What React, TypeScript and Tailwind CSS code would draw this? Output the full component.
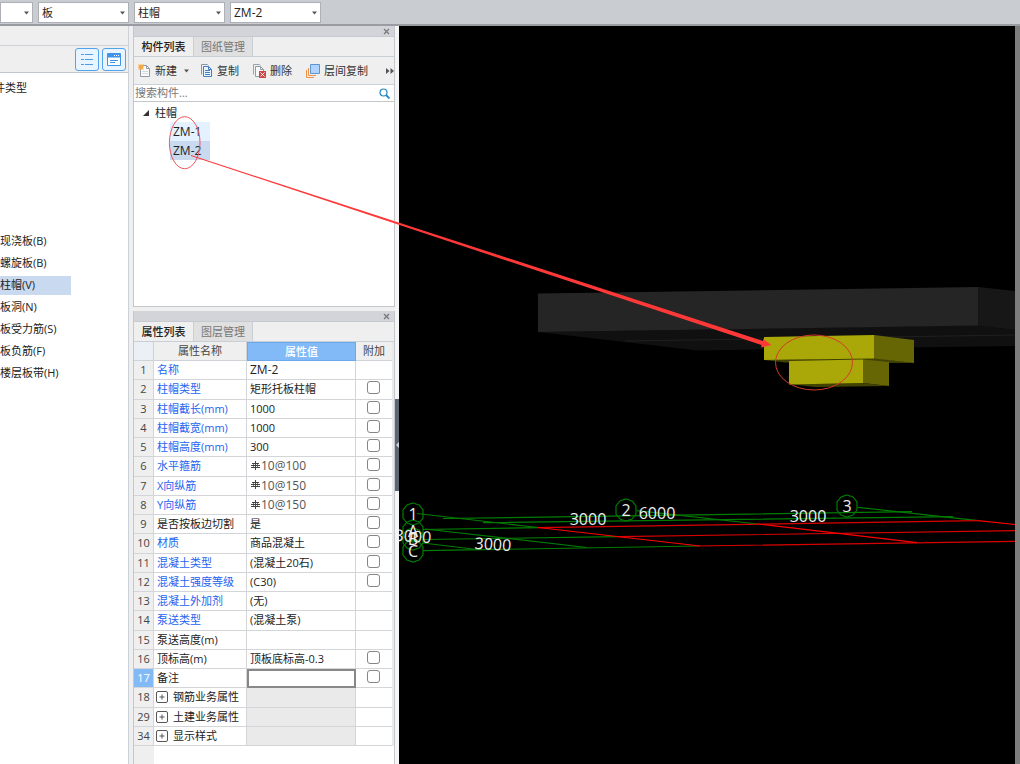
import React from 'react';

interface Property {
  no: number;
  name: string;
  value?: string;
  link?: boolean;
  rebar?: boolean;
  check?: boolean;
  group?: boolean;
  active?: boolean;
}

const properties: Property[] = [
  { no: 1, name: '名称', value: 'ZM-2', link: true },
  { no: 2, name: '柱帽类型', value: '矩形托板柱帽', link: true, check: true },
  { no: 3, name: '柱帽截长(mm)', value: '1000', link: true, check: true },
  { no: 4, name: '柱帽截宽(mm)', value: '1000', link: true, check: true },
  { no: 5, name: '柱帽高度(mm)', value: '300', link: true, check: true },
  { no: 6, name: '水平箍筋', value: '10@100', link: true, rebar: true, check: true },
  { no: 7, name: 'X向纵筋', value: '10@150', link: true, rebar: true, check: true },
  { no: 8, name: 'Y向纵筋', value: '10@150', link: true, rebar: true, check: true },
  { no: 9, name: '是否按板边切割', value: '是', check: true },
  { no: 10, name: '材质', value: '商品混凝土', link: true, check: true },
  { no: 11, name: '混凝土类型', value: '(混凝土20石)', link: true, check: true },
  { no: 12, name: '混凝土强度等级', value: '(C30)', link: true, check: true },
  { no: 13, name: '混凝土外加剂', value: '(无)', link: true },
  { no: 14, name: '泵送类型', value: '(混凝土泵)', link: true },
  { no: 15, name: '泵送高度(m)' },
  { no: 16, name: '顶标高(m)', value: '顶板底标高-0.3', check: true },
  { no: 17, name: '备注', check: true, active: true },
  { no: 18, name: '钢筋业务属性', group: true },
  { no: 29, name: '土建业务属性', group: true },
  { no: 34, name: '显示样式', group: true },
];

const categories = ['现浇板(B)', '螺旋板(B)', '柱帽(V)', '板洞(N)', '板受力筋(S)', '板负筋(F)', '楼层板带(H)'];

function TopSelect({ label, value, width }: { label: string; value: string; width: string }) {
  return (
    <div className={`relative shrink-0 ${width}`}>
      <select
        aria-label={label}
        defaultValue={value}
        className={`block h-[21px] w-full appearance-none border border-[#adb1b7] bg-white pl-[3px] leading-[19px] text-[#222] outline-none ${label === '构件' ? 'text-[12px]' : 'text-[11px]'}`}
      >
        <option>{value}</option>
      </select>
      <svg className="pointer-events-none absolute top-[9px] right-[4px] h-[4px] w-[5px]" viewBox="0 0 5 4">
        <path d="M0 .5h5L2.500 3.500z" fill="#555" />
      </svg>
    </div>
  );
}

function TitleBar({ label }: { label: string }) {
  return (
    <div className="flex h-[11px] shrink-0 items-center justify-end border-b border-[#c5c9d0] bg-[#d2d4da] pr-[4px]">
      <button aria-label={label}>
        <svg className="h-[7px] w-[7px]" viewBox="0 0 7 7">
          <path d="M1 1l5 5M6 1L1 6" stroke="#777" strokeWidth="1.2" />
        </svg>
      </button>
    </div>
  );
}

function Tabs({ items }: { items: string[] }) {
  return (
    <div className="flex h-[20px] shrink-0 border-b border-[#c9cfd6] bg-[#efefef]" role="tablist">
      <button role="tab" aria-selected="true" className="w-[59px] font-medium text-[#222]">{items[0]}</button>
      <button role="tab" aria-selected="false" className="w-[60px] border-x border-[#c9cfd6] bg-[#e0e0e0] text-[#777]">{items[1]}</button>
    </div>
  );
}

function NewIcon() {
  return (
    <svg className="h-[14px] w-[14px]" viewBox="0 0 14 14" fill="none">
      <path d="M2.500 5v7.500h9v-8l-3-3H5" fill="#fafafa" stroke="#929aa3" />
      <path d="M8.500 1.500v3h3" stroke="#929aa3" />
      <path d="M4 7.500h6M4 9.500h6" stroke="#d5dade" />
      <path d="M0 0l2 1 1-1 1 1 2-1-1 2 1 1-1 1 1 2-2-1-1 1-1-1-2 1 1-2-1-1 1-1z" fill="#f7a944" />
    </svg>
  );
}

function CopyIcon() {
  return (
    <svg className="h-[14px] w-[12px]" viewBox="0 0 12 14" fill="none">
      <path d="M.5 10.500v-10h6l1 1" stroke="#8c97a5" />
      <path d="M2.500 2.500h5l3 3v7h-8z" fill="#eaf3ff" stroke="#427fc6" />
      <path d="M7.500 2.500v3h3M4 6.500h5M4 8.500h5M4 10.500h5" stroke="#427fc6" />
    </svg>
  );
}

function DeleteIcon() {
  return (
    <svg className="h-[14px] w-[13px]" viewBox="0 0 13 14" fill="none">
      <path d="M.5 10.500v-10h6l1 1" stroke="#9ba3ad" />
      <path d="M6 12.500H2.500v-10h5l3 3V7" fill="#fafafa" stroke="#929aa3" />
      <path d="M7.500 2.500v3h3" stroke="#929aa3" />
      <path d="M6 7h7v7H6z" fill="#cf4545" />
      <path d="M7.500 8.500l4 4M11.500 8.500l-4 4" stroke="#fff" />
    </svg>
  );
}

function LayerIcon() {
  return (
    <svg className="h-[14px] w-[14px]" viewBox="0 0 14 14" fill="none">
      <path d="M.5 6v7.500H8M2.500 4v7.500H10" stroke="#f0924a" />
      <path d="M4.500.5h9v9h-9z" fill="#b0d4ff" stroke="#5a94d2" />
    </svg>
  );
}

function RebarIcon() {
  return (
    <svg className="mr-px mb-[3px] ml-px inline h-[9px] w-[9px]" viewBox="0 0 9 9" fill="none" stroke="#444">
      <path d="M4.500 0v9M0 6.500h9M1 2.500h7M0 4.500h9" />
      <path d="M2.500 2v5M6.500 2v5" strokeWidth=".7" />
    </svg>
  );
}

function Sidebar() {
  return (
    <aside className="flex w-[129px] shrink-0 flex-col border-r border-[#cbd1d8] bg-white">
      <div className="h-[20px] shrink-0 border-b border-[#cfd3d8] bg-[#efefef]" />
      <div className="flex h-[27px] shrink-0 items-center justify-end gap-[3px] border-b border-[#c3c8cf] bg-[#efefef] pr-[2px]">
        <button aria-label="列表视图" className="flex h-[23px] w-[24px] items-center justify-center rounded-[3px] border border-[#4fa3ef] bg-[#e8f4ff]">
          <svg className="h-[13px] w-[12px]" viewBox="0 0 12 13" stroke="#4b9cea" fill="none">
            <path d="M0 1.500h3M4 1.500h8M0 6.500h3M4 6.500h8M0 11.500h3M4 11.500h8" />
          </svg>
        </button>
        <button aria-label="窗口视图" className="flex h-[23px] w-[24px] items-center justify-center rounded-[3px] border border-[#4fa3ef] bg-[#e8f4ff]">
          <svg className="h-[13px] w-[14px]" viewBox="0 0 14 13" fill="none" stroke="#3f93e8">
            <path d="M.5.5h13v12H.5z" fill="#fff" />
            <path d="M1 1h12v3H1z" fill="#3f93e8" />
            <path d="M7 2.500h1M9 2.500h1M11 2.500h1" stroke="#fff" />
            <path d="M3 7.500h8M3 9.500h5" />
          </svg>
        </button>
      </div>
      <div className="-ml-[6px] mt-[6px] h-[18px] leading-[18px] whitespace-nowrap text-[#222]">件类型</div>
      <ul className="mt-[133px]">
        {categories.map((item) => (
          <li key={item} className="flex h-[22px] items-center">
            <button className={`h-[19px] w-[71px] text-left whitespace-nowrap ${item === '柱帽(V)' ? 'bg-[#c9d9f0]' : ''}`}>{item}</button>
          </li>
        ))}
      </ul>
    </aside>
  );
}

function ComponentPanel() {
  return (
    <section className="flex h-[281px] shrink-0 flex-col border border-t-0 border-[#c4c8cd] bg-white">
      <TitleBar label="关闭构件列表" />
      <Tabs items={['构件列表', '图纸管理']} />
      <div className="flex h-[28px] shrink-0 items-center border-b border-[#cbd1d8] bg-[#efefef] pl-[4px] whitespace-nowrap text-[#333]">
        <button className="flex items-center gap-[3px]">
          <NewIcon />
          新建
          <svg className="ml-[4px] h-[4px] w-[5px]" viewBox="0 0 5 4"><path d="M0 .5h5L2.500 3.500z" fill="#555" /></svg>
        </button>
        <button className="ml-[12px] flex items-center gap-[4px]"><CopyIcon />复制</button>
        <button className="ml-[14px] flex items-center gap-[4px]"><DeleteIcon />删除</button>
        <button className="ml-[14px] flex items-center gap-[4px]"><LayerIcon />层间复制</button>
        <button aria-label="更多" className="ml-auto">
          <svg className="h-[6px] w-[8px]" viewBox="0 0 8 6"><path d="M0 0l3.500 3L0 6zM4.500 0L8 3 4.500 6z" fill="#555" /></svg>
        </button>
      </div>
      <div className="flex h-[17px] shrink-0 items-center border-b border-[#c4c8cd] pr-[4px]">
        <input aria-label="搜索构件" placeholder="搜索构件..." className="min-w-0 flex-1 pl-px outline-none placeholder:text-[#777]" />
        <button aria-label="搜索">
          <svg className="h-[11px] w-[11px]" viewBox="0 0 11 11" fill="none" stroke="#2589c4">
            <circle cx="4.500" cy="4.500" r="3.500" strokeWidth="1.200" />
            <path d="M7 7l3.500 3.500" strokeWidth="1.800" />
          </svg>
        </button>
      </div>
      <div className="flex-1 pt-px">
        <button className="flex h-[19px] items-center gap-[6px] pl-[9px]">
          <svg className="h-[6px] w-[6px]" viewBox="0 0 6 6"><path d="M6 0v6H0z" fill="#333" /></svg>
          柱帽
        </button>
        <button className="ml-[36px] block h-[19px] w-[40px] bg-[#e4f1fe] pl-[3px] text-left text-[12px]">ZM-1</button>
        <button className="ml-[36px] block h-[19px] w-[40px] bg-[#c9d9f0] pl-[3px] text-left text-[12px]">ZM-2</button>
      </div>
    </section>
  );
}

function PropertyPanel() {
  return (
    <section className="mt-[4px] flex min-h-0 flex-1 flex-col border-x border-[#c4c8cd] bg-white">
      <TitleBar label="关闭属性列表" />
      <Tabs items={['属性列表', '图层管理']} />
      <table className="h-[404px] w-full shrink-0 table-fixed border-separate border-spacing-0 border-r-2 border-[#e8e9eb] text-left whitespace-nowrap">
        <colgroup>
          <col className="w-[20px]" />
          <col className="w-[93px]" />
          <col className="w-[109px]" />
          <col />
        </colgroup>
        <thead>
          <tr className="h-[19px] bg-[#efefef] text-center text-[#444]">
            <th className="border-r border-b border-[#cfd2d6] bg-[#eaf0f6] p-0" />
            <th className="border-r border-b border-[#cfd2d6] p-0 text-center font-normal">属性名称</th>
            <th className="border border-[#6ca9ea] bg-[#82baf8] p-0 text-center font-medium text-white">属性值</th>
            <th className="border-b border-[#cfd2d6] p-0 text-center font-normal">附加</th>
          </tr>
        </thead>
        <tbody>
          {properties.map((p) => (
            <tr key={p.no} className="h-[19px]">
              <td className={`border-r border-b border-[#d3d5d8] p-0 text-center ${p.active ? 'bg-[#82baf8] font-medium text-white' : 'bg-[#efefef] text-[#444]'}`}>{p.no}</td>
              <td className={`border-r border-b border-[#d3d5d8] p-0 ${p.group ? 'pl-[2px]' : 'pl-[3px]'} ${p.link ? 'text-[#2563f0]' : 'text-[#222]'}`}>
                {p.group ? (
                  <button className="flex items-center gap-[5px]">
                    <svg className="h-[12px] w-[12px]" viewBox="0 0 12 12" fill="none" stroke="#555">
                      <rect x=".5" y=".5" width="11" height="11" rx="1.500" />
                      <path d="M3.500 6h5M6 3.500v5" />
                    </svg>
                    {p.name}
                  </button>
                ) : p.name}
              </td>
              <td className={`p-0 ${p.rebar ? 'text-[12px] text-[#555]' : 'text-[#222]'} ${p.group ? 'bg-[#eaeaea]' : ''} ${p.no === 1 ? 'text-[12px]' : ''} ${p.active ? 'border-2 border-[#888]' : 'border-r border-b border-[#d3d5d8] pl-[3px]'}`}>
                {p.active ? (
                  <input aria-label={p.name} className="block h-[14px] w-full outline-none" />
                ) : (
                  <>
                    {p.rebar && <RebarIcon />}
                    {p.value}
                  </>
                )}
              </td>
              <td className="border-b border-[#d3d5d8] p-0 pr-[2px] pb-[3px]">
                {p.check && (
                  <input type="checkbox" aria-label={`附加 ${p.name}`} className="mx-auto block h-[13px] w-[13px] appearance-none rounded-[3px] border border-[#858585] bg-white" />
                )}
              </td>
            </tr>
          ))}
        </tbody>
      </table>
      <div className="w-[20px] flex-1 bg-[#efefef]" />
    </section>
  );
}

const decagon = '0,-11 6,-9 10,-4 10,4 6,9 0,11 -6,9 -10,4 -10,-4 -6,-9';

const axes = [
  { label: '1', x: 413, y: 514 },
  { label: '2', x: 626, y: 510 },
  { label: '3', x: 847, y: 506 },
  { label: 'A', x: 413, y: 531 },
  { label: 'B', x: 413, y: 539 },
  { label: 'C', x: 413, y: 551 },
];

function ModelView() {
  return (
    <main className="min-w-0 flex-1 overflow-hidden bg-black">
      <svg className="block h-full w-full" viewBox="399 26 616 738" preserveAspectRatio="xMinYMin slice">
        <polygon points="538,332 978,325 1015,330 1015,346 698,350.500" fill="#101010" />
        <path d="M625 341L1015 335" stroke="#202020" />
        <polygon points="538,293.500 978.500,287 978.500,325.500 538,332" fill="#252525" />
        <polygon points="978.500,287 1015,291 1015,330 978.500,325.500" fill="#171717" />
        <polygon points="764,360 874,358 914,363 785,362.500" fill="#424203" />
        <polygon points="789,384 862,383 889,386 815,387" fill="#424203" />
        <polygon points="789,361 863,359.500 863,383 789,384.500" fill="#a9a808" />
        <polygon points="863,359.500 889,362 889,386 863,383" fill="#666605" />
        <polygon points="764,337 874,335 874,358.500 764,360" fill="#a9a808" />
        <polygon points="874,335 914,340 914,363 874,358.500" fill="#666605" />
        <g stroke="#007d00" strokeWidth="1.200" fill="none">
          <path d="M417 513.500L538 527.500M425 529L587 547.500M423 543L477 549.500" />
          <path d="M443 518.500L912 511.700M483 522.700L953 516.700" />
          <path d="M423 529.500L538 527.700M423 539.500L617 536.700M423 550.700L697 546" />
          <path d="M637 510.700L758 524M858 507.300L978 520.700" />
          {axes.map((a) => (
            <polygon key={a.label} points={decagon} transform={`translate(${a.x} ${a.y})`} />
          ))}
        </g>
        <g stroke="#d90000" strokeWidth="1.200">
          <path d="M538 527.700L978 520.700M617 536.700L1015 530.700M697 546L1015 541.300" />
          <path d="M538 527.500L700 546M758 524L917 542.700M978 520.700L1015 524.500" stroke="#ff0000" />
        </g>
        <g fill="#eee" fontSize="16" textAnchor="middle">
          {axes.map((a) => (
            <text key={a.label} x={a.x} y={a.y + 6}>{a.label}</text>
          ))}
          <text x="588" y="525">3000</text>
          <text x="657" y="519">6000</text>
          <text x="808" y="522">3000</text>
          <text x="493" y="550" transform="rotate(4 493 544)">3000</text>
          <text x="413" y="542" transform="rotate(4 413 536)">3000</text>
        </g>
        <ellipse cx="814" cy="362.500" rx="38.500" ry="27.500" fill="none" stroke="#d23a2c" />
      </svg>
    </main>
  );
}

export default function App() {
  return (
    <div className="relative flex h-screen flex-col overflow-hidden bg-[#efefef] font-['Open_Sans','Noto_Sans_CJK_SC',sans-serif] text-[11px] leading-[14px] text-[#222]">
      <header className="flex h-[26px] shrink-0 items-start gap-[5px] border-b-2 border-[#999da3] bg-[#c9ccd1] pt-[2px]">
        <TopSelect label="楼层" value="" width="w-[33px]" />
        <TopSelect label="构件分类" value="板" width="w-[91px]" />
        <TopSelect label="构件类型" value="柱帽" width="w-[91px]" />
        <TopSelect label="构件" value="ZM-2" width="w-[91px]" />
      </header>
      <div className="flex min-h-0 flex-1">
        <Sidebar />
        <div className="ml-[4px] flex w-[262px] shrink-0 flex-col">
          <ComponentPanel />
          <PropertyPanel />
        </div>
        <div className="w-[4px] shrink-0 bg-[#f5f5f5]">
          <button aria-label="收起面板" className="mt-[373px] flex h-[92px] w-full items-center justify-end bg-[#5c6672]">
            <svg className="h-[6px] w-[3px]" viewBox="0 0 3 6"><path d="M3 0v6L0 3z" fill="#cfd5db" /></svg>
          </button>
        </div>
        <ModelView />
        <div className="w-[5px] shrink-0 bg-[#7d7d7d]" />
      </div>
      {/* Annotation linking the tree items to the model */}
      <svg className="pointer-events-none absolute inset-0 h-full w-full">
        <ellipse cx="184.700" cy="142.700" rx="15.300" ry="26" fill="none" stroke="#f0555a" />
        <polygon points="191,155 763,341 763,339 771.500,345 761,347.500 761.500,345 191,156" fill="#ff3838" />
      </svg>
    </div>
  );
}
